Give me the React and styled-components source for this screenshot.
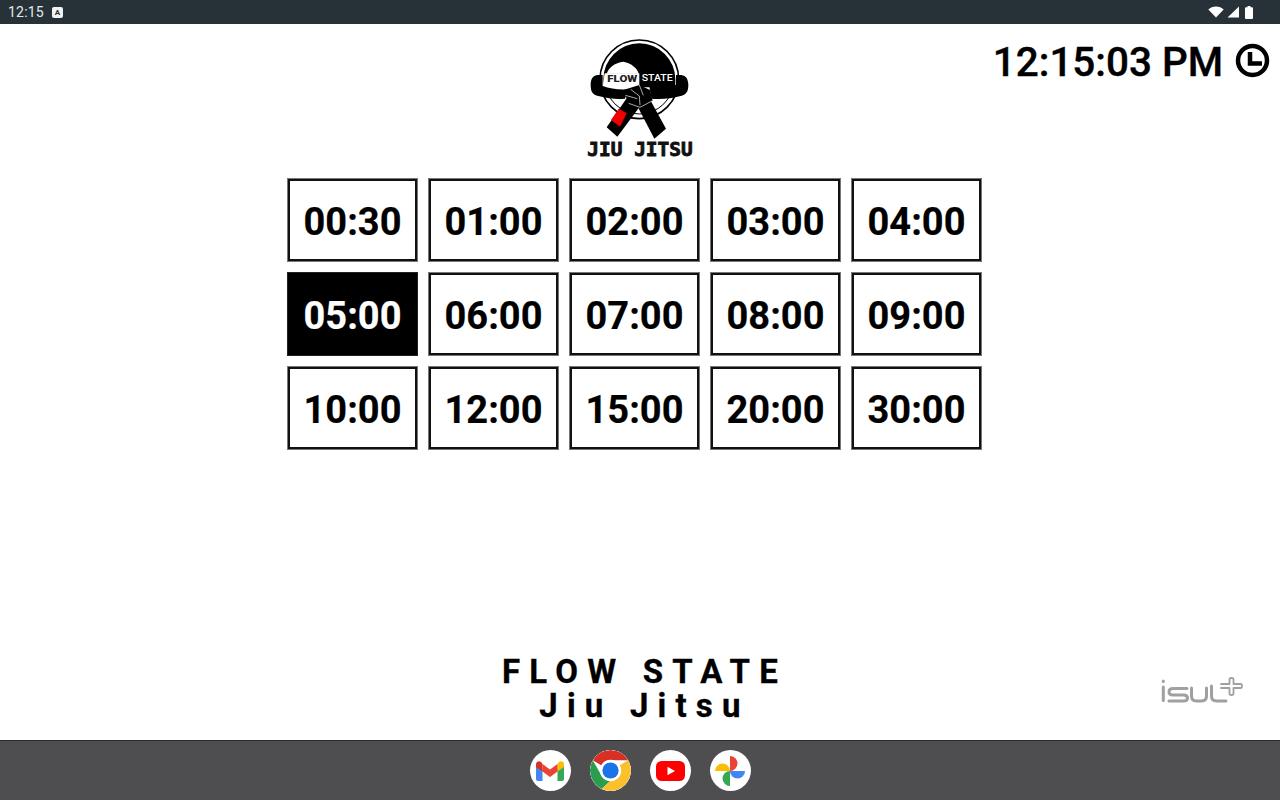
import React from 'react';
import styled, { createGlobalStyle } from 'styled-components';

const TIMES = [
  '00:30', '01:00', '02:00', '03:00', '04:00',
  '05:00', '06:00', '07:00', '08:00', '09:00',
  '10:00', '12:00', '15:00', '20:00', '30:00',
];
const SELECTED = '05:00';

const GlobalStyle = createGlobalStyle`
  html, body {
    margin: 0;
    padding: 0;
    background: #fff;
    font-family: Roboto, "Liberation Sans", sans-serif;
  }
`;

const Screen = styled.div`
  width: 1280px;
  height: 800px;
  display: flex;
  flex-direction: column;
  overflow: hidden;
`;

const StatusBar = styled.div`
  height: 24px;
  flex: none;
  background: #263238;
  color: #e6e9ea;
  display: flex;
  align-items: center;
  justify-content: space-between;
  padding: 0 27px 0 8px;
  font-size: 14px;
  letter-spacing: 0.2px;
`;

const StatusLeft = styled.div`
  display: flex;
  align-items: center;
  gap: 8px;
`;

const StatusRight = styled.div`
  display: flex;
  align-items: center;
  gap: 3px;
`;

const NoticeBadge = styled.div`
  width: 11px;
  height: 11px;
  border-radius: 2px;
  background: #f2f3f3;
  color: #263238;
  font-size: 8px;
  font-weight: 700;
  line-height: 11px;
  text-align: center;
  letter-spacing: 0;
`;

const Main = styled.main`
  flex: 1;
  display: flex;
  flex-direction: column;
  background: #fff;
`;

const Header = styled.header`
  height: 154px;
  flex: none;
  display: grid;
  grid-template-columns: 1fr 160px 1fr;
  padding: 6px 10px 0 0;
  box-sizing: border-box;
`;

const LogoSlot = styled.div`
  grid-column: 2;
  margin-left: 5px;
  width: 160px;
  height: 135px;
`;

const Clock = styled.div`
  grid-column: 3;
  justify-self: end;
  display: flex;
  align-items: center;
  gap: 12px;
  height: 64px;
  color: #000;
  font-size: 40.4px;
  font-weight: 500;
  -webkit-text-stroke: 0.4px #000;
`;

const ClockGlyph = styled.svg`
  width: 35px;
  height: 35px;
  margin-bottom: 4px;
  fill: none;
  stroke: #000;
  stroke-width: 4.5;
`;

const TimeGrid = styled.section`
  width: 695px;
  margin-left: 287px;
  display: grid;
  grid-template-columns: repeat(5, 131px);
  grid-auto-rows: 84px;
  gap: 10px;
`;

const TimeButton = styled.button`
  margin: 0;
  padding: 4px 0 0;
  box-sizing: border-box;
  border: 1px solid ${({ $active }) => ($active ? '#222' : '#777')};
  box-shadow: inset 0 0 0 2px ${({ $active }) => ($active ? '#000' : '#111')};
  background: ${({ $active }) => ($active ? '#000' : '#fff')};
  color: ${({ $active }) => ($active ? '#fff' : '#000')};
  font-family: Roboto, "Liberation Sans", sans-serif;
  font-size: 38px;
  font-weight: 700;
  -webkit-text-stroke: 0.2px currentColor;
  display: flex;
  align-items: center;
  justify-content: center;
`;

const Footer = styled.footer`
  margin-top: auto;
  height: 90px;
  display: grid;
  grid-template-columns: 1fr auto 1fr;
`;

const Brand = styled.div`
  grid-column: 2;
  margin: 5px -9px 0 0;
  text-align: center;
  font-size: 33px;
  font-weight: 700;
  line-height: 34px;
  letter-spacing: 9.2px;
  color: #000;
  -webkit-text-stroke: 0.3px #000;
`;

const Partner = styled.div`
  justify-self: end;
  margin: 26px 37px 0 0;
  width: 84px;
  height: 30px;
`;

const Dock = styled.nav`
  height: 60px;
  flex: none;
  box-sizing: border-box;
  border-top: 1px solid #2c2c2e;
  background: #4e4e50;
  display: flex;
  align-items: center;
  justify-content: center;
  gap: 19px;
`;

const DockIcon = styled.div`
  width: 41px;
  height: 41px;
  border-radius: 50%;
  background: #fff;
  display: flex;
  align-items: center;
  justify-content: center;
  overflow: hidden;
`;

const WifiIcon = () => (
  <svg width="16" height="12" viewBox="0 0 16 12">
    <path d="M0.3 3.6C2.3 1.7 5 .6 8 .6s5.7 1.1 7.7 3L8 11.6z" fill="#fff" />
  </svg>
);

const SignalIcon = () => (
  <svg width="12" height="12" viewBox="0 0 12 12">
    <path d="M12 0.5V11.5H0.5z" fill="#fff" />
  </svg>
);

const BatteryIcon = () => (
  <svg width="8" height="13" viewBox="0 0 8 13" style={{ marginLeft: 3 }}>
    <path d="M2.5 0h3v1.2H7a1 1 0 0 1 1 1V12a1 1 0 0 1-1 1H1a1 1 0 0 1-1-1V2.2a1 1 0 0 1 1-1h1.5z" fill="#fff" />
  </svg>
);

const ClockIcon = () => (
  <ClockGlyph viewBox="0 0 35 35">
    <circle cx="17.5" cy="17.5" r="14.5" />
    <path d="M15 9V20.5H27" />
  </ClockGlyph>
);

const FlowStateLogo = () => (
  <svg width="160" height="135" viewBox="0 0 480 405">
    <circle cx="238" cy="148" r="118" fill="none" stroke="#000" strokeWidth="5" />
    <circle cx="238" cy="148" r="104" fill="none" stroke="#000" strokeWidth="3" />
    <path d="M130 148A108 108 0 0 1 346 148V172H130z" fill="#000" />
    <path d="M140 131C146 112 165 98 190 95C215 100 232 115 236 131z" fill="#fff" />
    <path d="M134 130H238V182H126z" fill="#fff" />
    <text x="142" y="155" textLength="90" lengthAdjust="spacingAndGlyphs" fontFamily="Roboto, sans-serif" fontWeight="900" fontSize="27" fill="#222">FLOW</text>
    <text x="245" y="154" textLength="93" lengthAdjust="spacingAndGlyphs" fontFamily="Roboto, sans-serif" fontWeight="500" fontSize="25" fill="#fff">STATE</text>
    <path d="M112 135C98 137 92 148 92 165C92 185 98 195 115 198C145 206 170 208 195 206L205 178C175 180 150 176 128 168V135z" fill="#000" />
    <path d="M364 135C378 137 385 148 385 165C385 185 378 195 362 198C335 206 305 208 275 206L268 170C295 170 325 170 348 165V135z" fill="#000" />
    <path d="M200 205L238 232L172 320L140 292z" fill="#000" />
    <path d="M176 236L200 250L180 290L153 270z" fill="#f00000" />
    <path d="M232 228L272 212L318 296L283 326z" fill="#000" />
    <path d="M190 180L238 165L270 180L278 212L240 232L205 220z" fill="#000" />
    <path d="M212 178L238 198L240 226M238 165L250 196M196 196L232 206M206 220L240 232L278 212" fill="none" stroke="#fff" strokeWidth="2" />
    <text x="240" y="378" textAnchor="middle" textLength="316" lengthAdjust="spacingAndGlyphs" fontFamily="'DejaVu Sans Mono', monospace" fontWeight="700" fontSize="56" stroke="#111" strokeWidth="2.5" fill="#111">JIU JITSU</text>
  </svg>
);

const IsulLogo = () => (
  <svg width="84" height="30" viewBox="0 0 84 30" fill="none" stroke="#a0a0a0" strokeWidth="3" strokeLinecap="round" strokeLinejoin="round">
    <path d="M4.3 11V24.500" />
    <path d="M4.3 5V5.500" />
    <path d="M28 12.500H14Q10 12.500 10 15.800T14 19H24.500Q28.500 19 28.500 22T24.500 25H10" />
    <path d="M32.500 12V20Q32.500 25 37.500 25H42.500Q47.500 25 47.500 20V12" />
    <path d="M52.500 10V20Q52.500 25 57.500 25H67" />
    <path d="M62 8H70.500V3.200Q70.500 2 72.500 2Q74.500 2 74.500 3.200V8H81.500Q83 8 83 10Q83 12 81.500 12H74.500V17.500Q74.500 19 72.500 19Q70.500 19 70.500 17.500V12H62" strokeWidth="1.800" />
  </svg>
);

const GmailIcon = () => (
  <svg width="28" height="20" viewBox="0 0 28 20">
    <path d="M0 4V18A2 2 0 0 0 2 20H6.500V8z" fill="#4285f4" />
    <path d="M28 4V18A2 2 0 0 1 26 20H21.500V8z" fill="#34a853" />
    <path d="M21.500 3V10.500L28 6V3.500C28 0.500 25 -0.500 23 1z" fill="#fbbc04" />
    <path d="M6.500 10.500V3L14 8.500L21.500 3V10.500L14 16z" fill="#ea4335" />
    <path d="M0 3.500V6L6.500 10.500V3L5 1C3 -0.500 0 0.500 0 3.500z" fill="#d93025" />
  </svg>
);

const ChromeIcon = () => (
  <svg width="41" height="41" viewBox="0 0 48 48">
    <circle cx="24" cy="24" r="24" fill="#fff" />
    <path d="M24 0A24 24 0 0 1 44.800 12H24A12 12 0 0 0 13.600 18L3.200 12A24 24 0 0 1 24 0z" fill="#d93025" />
    <path d="M3.200 12L13.600 30A12 12 0 0 0 24 36L13.600 45.600A24 24 0 0 1 3.200 12z" fill="#2a9d4f" />
    <path d="M44.800 12A24 24 0 0 1 13.600 45.600L24 36A12 12 0 0 0 34.400 30A12 12 0 0 0 34.400 18z" fill="#fbc02d" />
    <circle cx="24" cy="24" r="12.500" fill="#fff" />
    <circle cx="24" cy="24" r="9.500" fill="#1a73e8" />
  </svg>
);

const YoutubeIcon = () => (
  <svg width="29" height="20" viewBox="0 0 29 20">
    <rect width="29" height="20" rx="5.500" fill="#f00" />
    <path d="M11.500 5.800L19 10L11.500 14.200z" fill="#fff" />
  </svg>
);

const PhotosIcon = () => (
  <svg width="30" height="30" viewBox="0 0 30 30">
    <path d="M7.500 7.500A7.500 7.500 0 0 1 15 15H0A7.500 7.500 0 0 1 7.500 7.500z" fill="#fbbc04" />
    <path d="M15 0A7.500 7.500 0 0 1 15 15V0z" fill="#ea4335" />
    <path d="M30 15A7.500 7.500 0 0 1 15 15z" fill="#4285f4" />
    <path d="M15 15V30A7.500 7.500 0 0 1 15 15z" fill="#34a853" />
  </svg>
);

export default function App() {
  return (
    <Screen>
      <GlobalStyle />
      <StatusBar>
        <StatusLeft>
          <span>12:15</span>
          <NoticeBadge>A</NoticeBadge>
        </StatusLeft>
        <StatusRight>
          <WifiIcon />
          <SignalIcon />
          <BatteryIcon />
        </StatusRight>
      </StatusBar>
      <Main>
        <Header>
          <LogoSlot>
            <FlowStateLogo />
          </LogoSlot>
          <Clock>
            12:15:03 PM
            <ClockIcon />
          </Clock>
        </Header>
        <TimeGrid>
          {TIMES.map((time) => (
            <TimeButton key={time} $active={time === SELECTED}>
              {time}
            </TimeButton>
          ))}
        </TimeGrid>
        <Footer>
          <Brand>
            FLOW STATE
            <br />
            Jiu Jitsu
          </Brand>
          <Partner>
            <IsulLogo />
          </Partner>
        </Footer>
      </Main>
      <Dock>
        <DockIcon><GmailIcon /></DockIcon>
        <DockIcon><ChromeIcon /></DockIcon>
        <DockIcon><YoutubeIcon /></DockIcon>
        <DockIcon><PhotosIcon /></DockIcon>
      </Dock>
    </Screen>
  );
}
